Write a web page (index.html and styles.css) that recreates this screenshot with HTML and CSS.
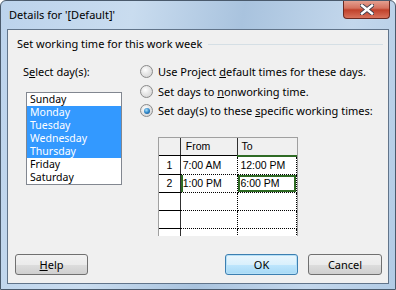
FILE: index.html
```html
<!DOCTYPE html>
<html lang="en">
<head>
    <meta charset="UTF-8">
    <title>Details for '[Default]'</title>
    <link rel="stylesheet" href="styles.css">
</head>
<body>
    <div class="window">
        <div class="titlebar">
            <span class="title">Details for '[Default]'</span>
            <div class="close">
                <svg width="14" height="11" viewBox="0 0 14 11">
                    <path d="M2 1.5 L12 9.5 M12 1.5 L2 9.5" stroke="#3b3b4a" stroke-width="4.2" stroke-linecap="square"/>
                    <path d="M2 1.5 L12 9.5 M12 1.5 L2 9.5" stroke="#ffffff" stroke-width="2.4" stroke-linecap="square"/>
                </svg>
            </div>
        </div>

        <div class="client">
            <div class="group-head">
                <span>Set working time for this work week</span>
                <span class="rule"></span>
            </div>

            <div class="main">
                <div class="days">
                    <div class="label">S<u>e</u>lect day(s):</div>
                    <ul class="daylist">
                        <li>Sunday</li>
                        <li class="sel">Monday</li>
                        <li class="sel">Tuesday</li>
                        <li class="sel">Wednesday</li>
                        <li class="sel">Thursday</li>
                        <li>Friday</li>
                        <li>Saturday</li>
                    </ul>
                </div>

                <div class="options">
                    <div class="radio"><span class="circle"></span><span>Use Project <u>d</u>efault times for these days.</span></div>
                    <div class="radio"><span class="circle"></span><span>Set days to <u>n</u>onworking time.</span></div>
                    <div class="radio"><span class="circle checked"></span><span>Set day(s) to these <u>s</u>pecific working times:</span></div>

                    <div class="grid-wrap">
                        <table class="times">
                            <tr class="head">
                                <td class="rh"></td>
                                <td class="from">From</td>
                                <td class="to">To</td>
                            </tr>
                            <tr>
                                <td class="rh">1</td>
                                <td class="cell">7:00 AM</td>
                                <td class="cell">12:00 PM</td>
                            </tr>
                            <tr>
                                <td class="rh">2</td>
                                <td class="cell mark-left">1:00 PM</td>
                                <td class="cell active">6:00 PM</td>
                            </tr>
                            <tr>
                                <td class="rh"></td>
                                <td class="cell"></td>
                                <td class="cell"></td>
                            </tr>
                            <tr>
                                <td class="rh"></td>
                                <td class="cell"></td>
                                <td class="cell"></td>
                            </tr>
                            <tr>
                                <td class="rh"></td>
                                <td class="cell"></td>
                                <td class="cell"></td>
                            </tr>
                        </table>
                    </div>
                </div>
            </div>

            <div class="buttons">
                <div class="btn"><u>H</u>elp</div>
                <div class="btn default">OK</div>
                <div class="btn">Cancel</div>
            </div>
        </div>
    </div>
</body>
</html>
```

FILE: styles.css
```css
body {
    margin: 0;
    font-family: "Noto Sans", sans-serif;
    font-size: 11px;
    color: #000;
    background: #fff;
}
.window {
    width: 396px;
    height: 290px;
    box-sizing: border-box;
    border: 1px solid #4a5a6c;
    border-radius: 6px 6px 0 0;
    background: linear-gradient(100deg, #bcd3ec 0%, #c9dcef 30%, #a9c3de 55%, #c3d7ec 80%, #b2cbe5 100%);
    display: flex;
    flex-direction: column;
    overflow: hidden;
}
.titlebar {
    height: 28px;
    display: flex;
    align-items: flex-start;
    padding-left: 8px;
}
.title {
    line-height: 16px;
    margin-top: 6px;
    flex: 1;
}
.close {
    width: 45px;
    height: 18px;
    margin: -1px 5px 0 0;
    border: 1px solid #6b2a22;
    border-top: none;
    border-radius: 0 0 4px 4px;
    background: linear-gradient(#e6a596 0%, #d5725f 45%, #c0412b 55%, #d8725c 100%);
    display: flex;
    align-items: center;
    justify-content: center;
}
.client {
    flex: 1;
    margin: 0 6px 5px 6px;
    border: 1px solid #61748a;
    background: #f0f0f0;
    display: flex;
    flex-direction: column;
}
.group-head {
    display: flex;
    align-items: center;
    padding: 6px 5px 0 9px;
    line-height: 16px;
}
.rule {
    flex: 1;
    height: 1px;
    margin-left: 6px;
    background: #d5dfe5;
}
.main {
    display: flex;
    padding-top: 12px;
}
.days {
    margin-left: 15px;
    width: 117px;
}
.label {
    line-height: 16px;
}
.daylist {
    list-style: none;
    margin: 12px 0 0 3px;
    padding: 0;
    width: 94px;
    height: 91px;
    border: 1px solid #828790;
    background: #fff;
    font-size: 10.5px;
}
.daylist li {
    height: 13px;
    line-height: 13px;
    padding-left: 3px;
}
.daylist li.sel {
    background: #3399ff;
    color: #fff;
}
.options {
    display: flex;
    flex-direction: column;
}
.radio {
    display: flex;
    align-items: center;
    height: 19.5px;
    margin-top: -2px;
    margin-bottom: 2px;
    white-space: nowrap;
}
.circle {
    flex: none;
    width: 11px;
    height: 11px;
    border: 1px solid #8b8b8b;
    border-radius: 50%;
    background: radial-gradient(circle at 40% 35%, #ffffff 0%, #e8e8e8 40%, #cfcfcf 100%);
    margin-right: 5px;
    display: flex;
    align-items: center;
    justify-content: center;
}
.circle.checked::after {
    content: "";
    width: 6px;
    height: 6px;
    border-radius: 50%;
    background: radial-gradient(circle at 40% 35%, #a6e0fb 0%, #2f86c8 50%, #14467c 100%);
}
.grid-wrap {
    margin: 14px 0 0 18px;
    width: 138px;
    height: 98px;
    border: 1px solid #a0a0a0;
    border-bottom: none;
    background: #fff;
    overflow: hidden;
}
.times {
    border-collapse: collapse;
    font-family: "Liberation Sans", Arial, sans-serif;
    font-size: 10.5px;
    table-layout: fixed;
}
.times td {
    padding: 0 0 0 2px;
    height: 17px;
    white-space: nowrap;
}
.times .rh {
    width: 22px;
    text-align: center;
    padding: 0;
    background: #fff;
    border-right: 1px solid #303030;
    border-bottom: 1px solid #000;
}
.times .head td {
    background: #f0f0f0;
    height: 17px;
    border-bottom: 1px solid #000;
}
.times .head .from {
    width: 53px;
    padding-left: 5px;
    border-right: 1px solid #303030;
}
.times .head .to {
    width: 56px;
    padding-left: 3px;
    border-bottom: 2px solid #2f6b25;
}
.times .cell {
    border-right: 1px dotted #000;
    border-bottom: 1px dotted #000;
}
.times .cell.mark-left {
    box-shadow: inset 2px 0 0 #2f6b25;
}
.times .cell.active {
    box-shadow: inset 0 0 0 2px #2f6b25;
}
.buttons {
    margin-top: auto;
    display: flex;
    padding: 0 6px 8px 7px;
}
.btn {
    width: 71px;
    height: 19px;
    line-height: 19px;
    text-align: center;
    border: 1px solid #707070;
    border-radius: 3px;
    background: linear-gradient(#f2f2f2 0%, #ebebeb 50%, #dddddd 51%, #cfcfcf 100%);
}
.btn:first-child {
    margin-right: auto;
}
.btn.default {
    margin-right: 10px;
    border-color: #3c7fb1;
    background: linear-gradient(#eaf6fd 0%, #d9f0fc 50%, #bee6fd 51%, #a7d9f5 100%);
    box-shadow: inset 0 0 0 1px #b6e0f7;
}
.btn:last-child {
    width: 72px;
}
```
